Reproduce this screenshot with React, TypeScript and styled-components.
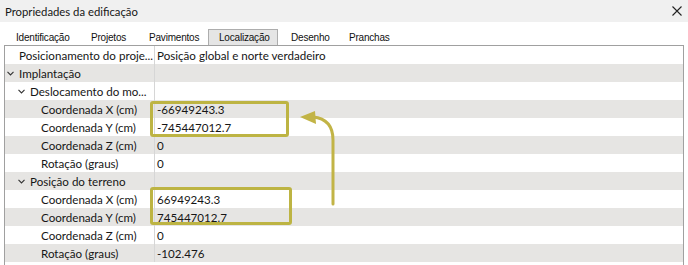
import React from 'react';
import styled, { createGlobalStyle } from 'styled-components';

const GlobalStyle = createGlobalStyle`
  html, body {
    margin: 0;
    padding: 0;
    background: #fff;
  }
  body {
    width: 688px;
    height: 265px;
    overflow: hidden;
    font-family: Lato, "Open Sans", sans-serif;
    color: #161616;
  }
`;

const Window = styled.div`
  width: 688px;
  height: 265px;
  display: flex;
  flex-direction: column;
  background: #fff;
`;

const TitleBar = styled.div`
  flex: none;
  height: 22px;
  display: flex;
  align-items: center;
  justify-content: space-between;
  padding: 0 6px 0 5px;
  background: #f0f0f0;
  font-size: 11.3px;
`;

const TabRow = styled.div`
  flex: none;
  height: 23px;
  display: flex;
  align-items: flex-end;
  gap: 2px;
  padding-left: 5px;
`;

const Tab = styled.div<{ $active?: boolean; $w: number }>`
  box-sizing: border-box;
  width: ${(p) => p.$w}px;
  height: 16px;
  display: flex;
  align-items: center;
  padding-left: 10px;
  font-family: "Liberation Sans", Arial, sans-serif;
  font-size: 10px;
  letter-spacing: -0.2px;
  color: #111;
  white-space: nowrap;
  background: ${(p) => (p.$active ? '#e5e5e5' : 'transparent')};
  border: 1px solid ${(p) => (p.$active ? '#adadad' : 'transparent')};
  border-bottom: none;
`;

const Grid = styled.div`
  position: relative;
  flex: 1;
  box-sizing: border-box;
  width: 680px;
  margin-left: 4px;
  border: 1px solid #a0a0a0;
  border-bottom: none;
  font-size: 11.6px;
`;

const Row = styled.div<{ $shade: boolean }>`
  display: grid;
  grid-template-columns: 150px 1fr;
  height: 18px;
  background: ${(p) => (p.$shade ? '#e6e5e3' : '#fff')};
`;

const NameCell = styled.div<{ $indent: number }>`
  box-sizing: border-box;
  display: flex;
  align-items: center;
  padding-left: ${(p) => p.$indent}px;
  border-right: 1px solid #d6d6d6;
  white-space: nowrap;
  overflow: hidden;
`;

const ValueCell = styled.div`
  display: flex;
  align-items: center;
  padding-left: 2px;
  white-space: nowrap;
`;

const Chevron = styled.svg`
  flex: none;
  width: 7px;
  height: 5px;
  margin-right: 5px;
`;

const Highlight = styled.div<{ $left: number; $top: number; $w: number; $h: number }>`
  position: absolute;
  left: ${(p) => p.$left}px;
  top: ${(p) => p.$top}px;
  width: ${(p) => p.$w}px;
  height: ${(p) => p.$h}px;
  box-sizing: border-box;
  border: 3px solid #bdb443;
  border-radius: 3px;
  pointer-events: none;
`;

const ArrowLayer = styled.svg`
  position: absolute;
  left: 0;
  top: 0;
  width: 678px;
  height: 219px;
  pointer-events: none;
`;

type Item = { name: string; value?: string; level: number; group?: boolean };

const items: Item[] = [
  { name: 'Posicionamento do proje...', value: 'Posição global e norte verdadeiro', level: 1 },
  { name: 'Implantação', level: 1, group: true },
  { name: 'Deslocamento do mo...', level: 2, group: true },
  { name: 'Coordenada X (cm)', value: '-66949243.3', level: 3 },
  { name: 'Coordenada Y (cm)', value: '-745447012.7', level: 3 },
  { name: 'Coordenada Z (cm)', value: '0', level: 3 },
  { name: 'Rotação (graus)', value: '0', level: 3 },
  { name: 'Posição do terreno', level: 2, group: true },
  { name: 'Coordenada X (cm)', value: '66949243.3', level: 3 },
  { name: 'Coordenada Y (cm)', value: '745447012.7', level: 3 },
  { name: 'Coordenada Z (cm)', value: '0', level: 3 },
  { name: 'Rotação (graus)', value: '-102.476', level: 3 },
];

const tabs = [
  { label: 'Identificação', w: 73 },
  { label: 'Projetos', w: 56 },
  { label: 'Pavimentos', w: 68 },
  { label: 'Localização', w: 70 },
  { label: 'Desenho', w: 56 },
  { label: 'Pranchas', w: 60 },
];

function App() {
  return (
    <Window>
      <GlobalStyle />
      <TitleBar>
        <span>Propriedades da edificação</span>
        <svg width="10" height="10" viewBox="0 0 10 10">
          <path d="M0.5 0.5 L9.5 9.5 M9.5 0.5 L0.5 9.5" stroke="#222" strokeWidth="1.1" />
        </svg>
      </TitleBar>
      <TabRow>
        {tabs.map((t) => (
          <Tab key={t.label} $w={t.w} $active={t.label === 'Localização'}>
            {t.label}
          </Tab>
        ))}
      </TabRow>
      <Grid>
        {items.map((it, i) => {
          const indent = 14 + (it.level - 1) * 11;
          return (
            <Row key={i} $shade={i % 2 === 1}>
              <NameCell $indent={it.group ? indent - 12 : indent}>
                {it.group && (
                  <Chevron viewBox="0 0 7 5">
                    <path d="M0.5 0.8 L3.5 3.9 L6.5 0.8" fill="none" stroke="#333" strokeWidth="1.1" />
                  </Chevron>
                )}
                {it.name}
              </NameCell>
              <ValueCell>{it.value}</ValueCell>
            </Row>
          );
        })}
        <Highlight $left={145} $top={55} $w={139} $h={36} />
        <Highlight $left={145} $top={141} $w={142} $h={38} />
        {/* page coordinates through the viewBox offset */}
        <ArrowLayer viewBox="5 46 678 219">
          <path
            d="M333 204 L333 140 Q333 119 313 117"
            fill="none"
            stroke="#c2b446"
            strokeWidth="3"
            strokeLinecap="round"
          />
          <polygon points="300,117 315,111 316,124" fill="#c2b446" />
        </ArrowLayer>
      </Grid>
    </Window>
  );
}

export default App;
